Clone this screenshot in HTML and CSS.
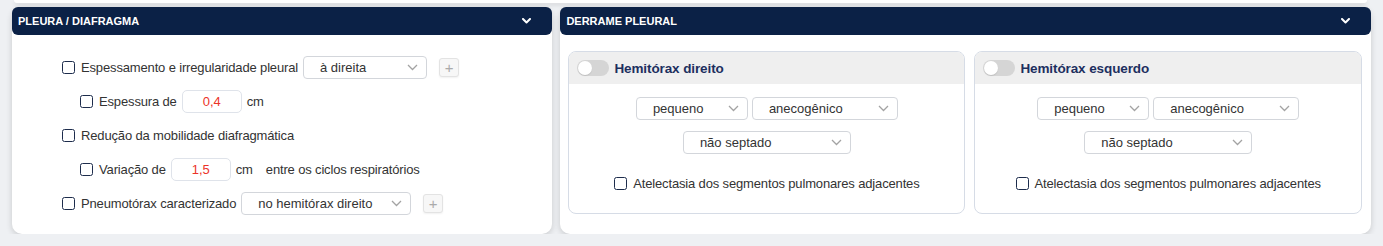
FILE: index.html
```html
<!DOCTYPE html>
<html lang="pt-BR">
<head>
    <meta charset="UTF-8">
    <meta name="viewport" content="width=device-width, initial-scale=1.0">
    <title>Pleura / Derrame pleural</title>
    <link rel="stylesheet" href="styles.css">
</head>
<body>
    <div class="prev-card"></div>

    <div class="panels">
        <!-- Pleura / diafragma -->
        <section class="card">
            <div class="card-header">
                <span>PLEURA / DIAFRAGMA</span>
                <svg class="chev" width="9" height="6" viewBox="0 0 9 6"><polyline points="1,1 4.5,4.5 8,1"/></svg>
            </div>
            <div class="pleura">
                <div class="row">
                    <label class="check"><input type="checkbox"> Espessamento e irregularidade pleural</label>
                    <div class="select w-side">
                        <select><option>à direita</option></select>
                        <svg width="11" height="7" viewBox="0 0 11 7"><polyline points="1,1 5.5,5.5 10,1"/></svg>
                    </div>
                    <button class="add">+</button>
                </div>
                <div class="row sub">
                    <label class="check"><input type="checkbox"> Espessura de</label>
                    <input class="num" type="text" value="0,4">
                    <span>cm</span>
                </div>
                <div class="row">
                    <label class="check"><input type="checkbox"> Redução da mobilidade diafragmática</label>
                </div>
                <div class="row sub">
                    <label class="check"><input type="checkbox"> Variação de</label>
                    <input class="num" type="text" value="1,5">
                    <span>cm</span>
                    <span class="after">entre os ciclos respiratórios</span>
                </div>
                <div class="row">
                    <label class="check"><input type="checkbox"> Pneumotórax caracterizado</label>
                    <div class="select w-pneumo">
                        <select><option>no hemitórax direito</option></select>
                        <svg width="11" height="7" viewBox="0 0 11 7"><polyline points="1,1 5.5,5.5 10,1"/></svg>
                    </div>
                    <button class="add">+</button>
                </div>
            </div>
        </section>

        <!-- Derrame pleural -->
        <section class="card">
            <div class="card-header">
                <span>DERRAME PLEURAL</span>
                <svg class="chev" width="9" height="6" viewBox="0 0 9 6"><polyline points="1,1 4.5,4.5 8,1"/></svg>
            </div>
            <div class="derrame">
                <div class="side">
                    <div class="side-head">
                        <span class="toggle"><span class="knob"></span></span>
                        Hemitórax direito
                    </div>
                    <div class="side-body">
                        <div class="pair">
                            <div class="select w-size">
                                <select><option>pequeno</option></select>
                                <svg width="11" height="7" viewBox="0 0 11 7"><polyline points="1,1 5.5,5.5 10,1"/></svg>
                            </div>
                            <div class="select w-echo">
                                <select><option>anecogênico</option></select>
                                <svg width="11" height="7" viewBox="0 0 11 7"><polyline points="1,1 5.5,5.5 10,1"/></svg>
                            </div>
                        </div>
                        <div class="select w-sept">
                            <select><option>não septado</option></select>
                            <svg width="11" height="7" viewBox="0 0 11 7"><polyline points="1,1 5.5,5.5 10,1"/></svg>
                        </div>
                        <label class="check atelect"><input type="checkbox"> Atelectasia dos segmentos pulmonares adjacentes</label>
                    </div>
                </div>
                <div class="side">
                    <div class="side-head">
                        <span class="toggle"><span class="knob"></span></span>
                        Hemitórax esquerdo
                    </div>
                    <div class="side-body">
                        <div class="pair">
                            <div class="select w-size">
                                <select><option>pequeno</option></select>
                                <svg width="11" height="7" viewBox="0 0 11 7"><polyline points="1,1 5.5,5.5 10,1"/></svg>
                            </div>
                            <div class="select w-echo">
                                <select><option>anecogênico</option></select>
                                <svg width="11" height="7" viewBox="0 0 11 7"><polyline points="1,1 5.5,5.5 10,1"/></svg>
                            </div>
                        </div>
                        <div class="select w-sept">
                            <select><option>não septado</option></select>
                            <svg width="11" height="7" viewBox="0 0 11 7"><polyline points="1,1 5.5,5.5 10,1"/></svg>
                        </div>
                        <label class="check atelect"><input type="checkbox"> Atelectasia dos segmentos pulmonares adjacentes</label>
                    </div>
                </div>
            </div>
        </section>
    </div>
</body>
</html>
```

FILE: styles.css
```css
/* General */
body {
    margin: 0;
    background-color: #eef0f3;
    font-family: "Liberation Sans", Arial, sans-serif;
    font-size: 13px;
    color: #333;
    letter-spacing: -0.15px;
}

/* Bottom edge of the card above */
.prev-card {
    height: 3px;
    margin: 0 16px 0 14px;
    background-color: #fff;
    border-radius: 0 0 10px 10px;
    box-shadow: 0 2px 4px rgba(0, 0, 0, 0.12);
}

.panels {
    display: grid;
    grid-template-columns: 2fr 3fr;
    gap: 8px;
    padding: 4px 12px 0;
}

/* Cards */
.card {
    background-color: #fff;
    border-radius: 10px;
    box-shadow: 0 2px 6px rgba(0, 0, 0, 0.16);
}

.card-header {
    height: 28px;
    display: flex;
    align-items: center;
    justify-content: space-between;
    padding: 0 21px 0 6px;
    background-color: #0b2146;
    border-radius: 6px;
    color: #fff;
    font-size: 11px;
    font-weight: bold;
    letter-spacing: 0;
}

.chev polyline {
    fill: none;
    stroke: #fff;
    stroke-width: 2;
    stroke-linecap: round;
    stroke-linejoin: round;
}

/* Checkboxes */
.check {
    display: flex;
    align-items: center;
    gap: 6px;
    white-space: nowrap;
}

.check input {
    appearance: none;
    -webkit-appearance: none;
    width: 13px;
    height: 13px;
    margin: 0;
    background-color: #fff;
    border: 1.5px solid #1d2c4c;
    border-radius: 2.5px;
}

/* Selects */
.select {
    position: relative;
}

.select select {
    appearance: none;
    -webkit-appearance: none;
    width: 100%;
    height: 23px;
    margin: 0;
    padding: 0 0 0 16px;
    background-color: #fff;
    border: 1px solid #d3d6db;
    border-radius: 4px;
    font: inherit;
    color: #333;
}

.select svg {
    position: absolute;
    right: 9px;
    top: 8px;
    pointer-events: none;
}

.select polyline {
    fill: none;
    stroke: #a3a3a3;
    stroke-width: 1.3;
}

.w-side { width: 124px; }
.w-pneumo { width: 170px; }
.w-size { width: 112px; }
.w-echo { width: 146px; }
.w-sept { width: 168px; }

/* Pleura / diafragma */
.pleura {
    display: flex;
    flex-direction: column;
    gap: 10px;
    padding: 20px 0 19px 50px;
}

.row {
    display: flex;
    align-items: center;
    gap: 5px;
    height: 24px;
}

.row.sub {
    padding-left: 18px;
}

.num {
    width: 60px;
    height: 23px;
    box-sizing: border-box;
    margin: 0;
    padding: 0;
    border: 1px solid #dfe3ea;
    border-radius: 5px;
    text-align: center;
    font: inherit;
    color: #ec3328;
}

.after {
    margin-left: 8px;
}

.add {
    width: 20px;
    height: 19px;
    margin-left: 7px;
    padding: 0;
    background-color: #f7f7f7;
    border: 1px solid #e3e3e3;
    border-radius: 3px;
    box-shadow: 0 1px 2px rgba(0, 0, 0, 0.06);
    color: #aaa;
    font-family: inherit;
    font-size: 15px;
    line-height: 1;
}

/* Derrame pleural */
.derrame {
    display: grid;
    grid-template-columns: 397px 1fr;
    gap: 9px;
    padding: 16px 9px 20px 8px;
}

.side {
    border: 1px solid #d6dce6;
    border-radius: 8px;
    overflow: hidden;
}

.side-head {
    height: 32px;
    display: flex;
    align-items: center;
    gap: 5px;
    padding: 0 8px;
    background-color: #efefef;
    color: #1d2f5f;
    font-size: 13.5px;
    font-weight: bold;
    letter-spacing: -0.1px;
}

.toggle {
    width: 32px;
    height: 16px;
    box-sizing: border-box;
    display: flex;
    align-items: center;
    padding: 1px;
    background-color: #d5d5d5;
    border-radius: 8px;
}

.knob {
    width: 14px;
    height: 14px;
    background-color: #fff;
    border-radius: 50%;
    box-shadow: 0 1px 1px rgba(0, 0, 0, 0.1);
}

.side-body {
    display: flex;
    flex-direction: column;
    align-items: center;
    gap: 11px;
    padding: 13px 0 21px;
}

.pair {
    display: flex;
    gap: 4px;
}

.atelect {
    height: 17px;
    margin-top: 10px;
}
```
